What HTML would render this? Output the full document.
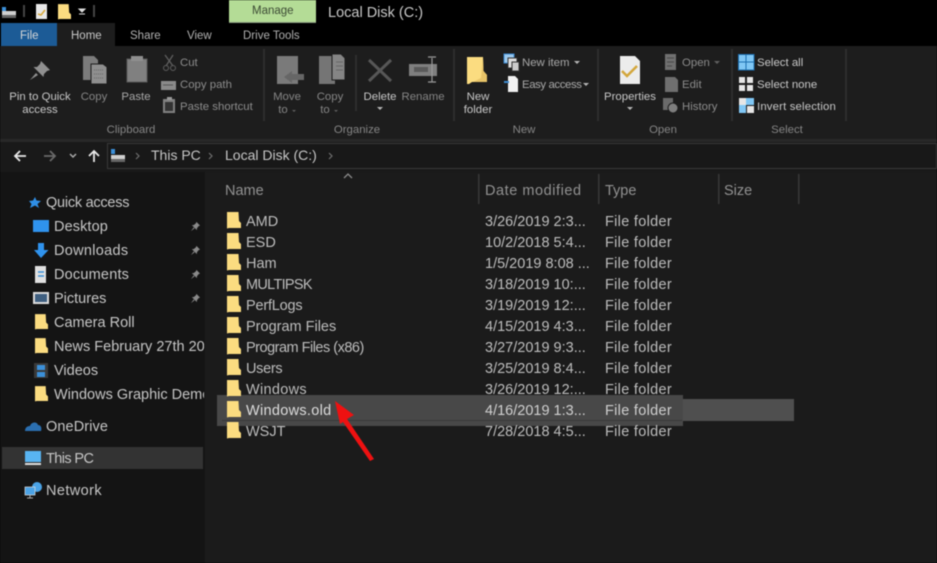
<!DOCTYPE html>
<html><head><meta charset="utf-8">
<style>
html,body{margin:0;padding:0;background:#000}
#r{position:relative;width:937px;height:563px;overflow:hidden;background:#1b1b1b;font-family:"Liberation Sans",sans-serif;filter:blur(.5px)}
.a{position:absolute}
.t{position:absolute;white-space:nowrap;line-height:14px;font-size:11.4px;color:#a8a8a8;margin-top:1px}
.c{transform:translateX(-50%)}
.w{color:#c8c8c8}
.d{color:#8c8c8c}
.g{color:#858585}
.s{font-size:14.5px;line-height:18px;color:#c6c6c6}
.h{font-size:14.5px;line-height:18px;color:#929292}
.f{font-size:14.5px;line-height:18px;color:#bdbdbd}
.y{letter-spacing:.3px}
svg{position:absolute;left:0;top:0}
</style></head><body><div id="r">
<div class="a" style="left:0;top:0;width:937px;height:46px;background:#000"></div>
<div class="a" style="left:0;top:46px;width:937px;height:93px;background:#1d1d1d"></div>
<div class="a" style="left:0;top:139px;width:937px;height:3px;background:#282828"></div>
<div class="a" style="left:0;top:142px;width:937px;height:30px;background:#191919"></div>
<div class="a" style="left:0;top:172px;width:205px;height:391px;background:#141414"></div>
<div class="a" style="left:205px;top:172px;width:732px;height:391px;background:#1b1b1b"></div>
<div class="a" style="left:107px;top:143px;width:830px;height:26px;border:1px solid #383838;box-sizing:border-box;background:#181818"></div>
<div class="a" style="left:1px;top:23px;width:56px;height:23px;background:#1c5b96"></div>
<div class="a" style="left:57px;top:23px;width:58px;height:23px;background:#1d1d1d"></div>
<div class="a" style="left:229px;top:0;width:87px;height:23px;background:#b4dc96"></div>
<div class="a" style="left:2px;top:447px;width:201px;height:22px;background:#333"></div>
<div class="a" style="left:683px;top:399px;width:111px;height:22px;background:#4f4f4f"></div>
<div class="a" style="left:217px;top:395px;width:466px;height:31px;background:#484848"></div>
<div class="a" style="left:222px;top:420px;width:460px;height:1px;background:#383838"></div>

<svg width="937" height="563" viewBox="0 0 937 563">
<defs>
<symbol id="fo" viewBox="0 0 14 17"><path d="M0 0H11.5L12 9L14 11V16H2L0 16.500Z" fill="#fbdc80"/></symbol>
<symbol id="fb" viewBox="0 0 20 27"><path d="M0 0H16L16.500 14L20 18V25H5L2 27H0Z" fill="#fbdc80"/><path d="M16 1L16.500 14L20 18V25H6L14 21Z" fill="#e8c468"/></symbol>
<symbol id="pn" viewBox="0 0 12 12"><path d="M7 1L11 5L9.500 5.500L7.500 8L7.500 10L2 4.500H4L6.500 2.500ZM4 7L1 11L5 8Z" fill="#8a8a8a"/></symbol>
</defs>
<!-- quick access -->
<rect x="2" y="11" width="14" height="7" fill="#cfcfcf"/><rect x="2" y="15" width="14" height="3" fill="#666"/><rect x="2" y="7" width="4" height="4" fill="#3b8fd8"/>
<rect x="23" y="5" width="2" height="12" fill="#444"/>
<rect x="36" y="4" width="11" height="15" fill="#e8e8e8"/><path d="M38 14L41 15L45 10" stroke="#d9a93a" stroke-width="1.500" fill="none"/>
<use href="#fo" x="58" y="4" width="13" height="16"/>
<path d="M79 9H85L82 12Z M79 14H85" stroke="#ddd" stroke-width="1" fill="#ddd"/>
<rect x="93" y="5" width="2" height="12" fill="#444"/>
<rect x="229" y="22" width="87" height="1" fill="#8a9a80"/>
<!-- pin -->
<path d="M41 61L50 70L47 71L44 74L43.500 77L33.500 67H37L40 64ZM36 73L30 80L38 75Z" fill="#909090"/>
<!-- copy -->
<path d="M83 56H94L98 60V80H83Z" fill="#7c7c7c"/><path d="M91 64H103L107 67V84H91Z" fill="#8f8f8f" stroke="#1d1d1d"/><path d="M94 70H104M94 74H104M94 78H104" stroke="#666" stroke-dasharray="1 1"/>
<!-- paste -->
<rect x="127" y="59" width="20" height="23" fill="#808080" stroke="#5a5a5a"/><rect x="131" y="56" width="12" height="5" fill="#8f8f8f"/>
<!-- cut -->
<path d="M165 55L173 66M173 55L166 66" stroke="#5e5e5e" stroke-width="1.300" fill="none"/><circle cx="166" cy="68" r="2.500" fill="none" stroke="#5e5e5e"/><circle cx="173" cy="68" r="2.500" fill="none" stroke="#5e5e5e"/>
<rect x="161" y="81" width="15" height="9" fill="#8a8a8a"/><path d="M163 85H173" stroke="#555"/>
<rect x="163" y="99" width="12" height="14" fill="#808080"/><rect x="165" y="102" width="8" height="9" fill="#333"/><rect x="167" y="97" width="5" height="3" fill="#999"/>
<!-- move to -->
<rect x="277" y="56" width="21" height="28" fill="#7a7a7a"/><path d="M284 77L292 71V74H304V80H292V83Z" fill="#666"/>
<!-- copy to -->
<path d="M319 56H335V84H319Z" fill="#757575"/><path d="M332 54H341L345 58V80H332Z" fill="#858585" stroke="#1d1d1d"/>
<path d="M336 62H343M336 66H343M336 70H343" stroke="#666"/>
<!-- delete -->
<path d="M369 60L391 81M391 60L369 81" stroke="#575757" stroke-width="3"/>
<!-- rename -->
<rect x="409" y="64" width="28" height="12" fill="#7f7f7f"/><rect x="414" y="67" width="14" height="5" fill="#5a5a5a"/><path d="M432 58V82M428 57H436M428 82H436" stroke="#9a9a9a" stroke-width="1.200"/>
<!-- new folder -->
<use href="#fb" x="467" y="57" width="20" height="27"/>
<!-- new item -->
<rect x="504" y="54" width="10" height="9" fill="#9cc8ec" stroke="#3d8ad0"/><rect x="508" y="58" width="9" height="10" fill="#ddd" stroke="#333"/><rect x="512" y="62" width="7" height="9" fill="#ccc" stroke="#333"/>
<!-- easy access -->
<path d="M508 76H515L518 79V92H508Z" fill="#f0f0f0"/><path d="M504 82H509" stroke="#3d8ad0" stroke-width="2"/>
<!-- properties -->
<path d="M620 56H635L640 61V84H620Z" fill="#ececec"/><path d="M622 71L627 76L637 66" stroke="#d3a63b" stroke-width="2.500" fill="none"/>
<!-- open/edit/history -->
<rect x="665" y="54" width="11" height="16" fill="#707070"/><path d="M667 58H674M667 62H674M667 66H672" stroke="#4a4a4a"/>
<path d="M665 77H675L678 80V92H665Z" fill="#6f6f6f"/>
<path d="M663 98H673V110H663Z" fill="#6a6a6a"/><circle cx="673" cy="108" r="5" fill="#7e7e7e" stroke="#1d1d1d"/>
<!-- select -->
<rect x="738.500" y="54.500" width="15.500" height="15.500" fill="#80c7f5" stroke="#1c6fb0"/><path d="M746 54V70M738 62H754" stroke="#1c6fb0"/>
<g fill="#e6e6e6"><rect x="739" y="77" width="6" height="6"/><rect x="747" y="77" width="6" height="6"/><rect x="739" y="85" width="6" height="6"/><rect x="747" y="85" width="6" height="6"/></g>
<rect x="739" y="98" width="7" height="7" fill="#e6e6e6"/><rect x="746" y="98" width="8" height="7" fill="#80c7f5"/><rect x="739" y="105" width="7" height="8" fill="#80c7f5"/><rect x="747" y="106" width="7" height="7" fill="#e6e6e6"/>
<!-- carets -->
<g fill="#b5b5b5"><path d="M574 61H580L577 64Z"/><path d="M583 83H589L586 86Z"/><path d="M377 107H383L380 110Z"/><path d="M627 107H633L630 110Z"/></g>
<path d="M714 61H720L717 64Z" fill="#5f5f5f"/><path d="M292 110H296L294 112Z" fill="#5f5f5f"/><path d="M334 110H338L336 112Z" fill="#5f5f5f"/>
<!-- ribbon seps -->
<g fill="#2e2e2e"><rect x="263" y="49" width="2" height="72"/><rect x="355" y="55" width="2" height="56"/><rect x="453" y="49" width="2" height="72"/><rect x="597" y="49" width="2" height="72"/><rect x="731" y="49" width="2" height="72"/><rect x="845" y="49" width="2" height="72"/></g>
<!-- nav -->
<path d="M26 156H15M20 151L15 156L20 161" stroke="#e8e8e8" stroke-width="1.800" fill="none"/>
<path d="M44 156H55M50 151L55 156L50 161" stroke="#6a6a6a" stroke-width="1.800" fill="none"/>
<path d="M70 154L73 157L76 154" stroke="#aaa" stroke-width="1.500" fill="none"/>
<path d="M94 162V151M89 156L94 151L99 156" stroke="#e8e8e8" stroke-width="1.800" fill="none"/>
<rect x="111" y="155" width="14" height="7" fill="#cfcfcf"/><rect x="111" y="159" width="14" height="3" fill="#666"/><rect x="111" y="149" width="4" height="5" fill="#3b8fd8"/>
<path d="M136 153L139 156L136 159M209 153L212 156L209 159M329 153L332 156L329 159" stroke="#6f6f6f" stroke-width="1.200" fill="none"/>
<!-- sidebar icons -->
<path d="M35 197L36.500 200.500L41 201L37.500 204L39 208L35 205.500L30 208L31.500 204L29 201L33 200.500Z" fill="#2f8fe6"/>
<rect x="33" y="220" width="16" height="12" fill="#2f93ee"/>
<path d="M38 243H44V250H48.500L41 258L34 250H38Z" fill="#2f93ee"/>
<rect x="35" y="266" width="11" height="17" fill="#e0e0e0"/><path d="M38 272H44M38 276H44" stroke="#3b8fd8" stroke-width="1.500"/>
<rect x="33" y="292" width="16" height="12" fill="#dcdcdc"/><rect x="35" y="294" width="12" height="8" fill="#3f5f80"/>
<use href="#fo" x="35" y="314" width="13" height="16"/>
<use href="#fo" x="35" y="338" width="13" height="16"/>
<rect x="34" y="363" width="14" height="15" fill="#3a3a3a"/><rect x="37" y="365" width="8" height="5" fill="#3b8fd8"/><rect x="37" y="372" width="8" height="5" fill="#3b8fd8"/>
<use href="#fo" x="35" y="386" width="13" height="16"/>
<path d="M25 431C25 427 28 426 30 426C31 422 37 421 38 425C41 425 42 428 41 431Z" fill="#2b6fb0"/>
<rect x="25" y="451" width="16" height="11" fill="#58b4f2"/><rect x="25" y="463" width="16" height="2" fill="#ddd"/>
<circle cx="37" cy="487" r="5" fill="#4ba3e6"/><rect x="25" y="487" width="10" height="8" fill="#4ba3e6" stroke="#ddd" stroke-width=".7"/><path d="M30 495V498M27 498H33" stroke="#aaa"/>
<use href="#pn" x="190" y="221" width="11" height="11"/><use href="#pn" x="190" y="245" width="11" height="11"/><use href="#pn" x="190" y="269" width="11" height="11"/><use href="#pn" x="190" y="293" width="11" height="11"/>
<!-- header -->
<path d="M344 178L348 174L352 178" stroke="#8a8a8a" stroke-width="1.300" fill="none"/>
<g fill="#383838"><rect x="478" y="174" width="1.500" height="30"/><rect x="598" y="174" width="1.500" height="30"/><rect x="718" y="174" width="1.500" height="30"/><rect x="798" y="174" width="1.500" height="30"/></g>
<!-- list folders -->
<use href="#fo" x="227" y="212" width="14" height="17"/><use href="#fo" x="227" y="233" width="14" height="17"/><use href="#fo" x="227" y="254" width="14" height="17"/><use href="#fo" x="227" y="275" width="14" height="17"/><use href="#fo" x="227" y="296" width="14" height="17"/><use href="#fo" x="227" y="317" width="14" height="17"/><use href="#fo" x="227" y="338" width="14" height="17"/><use href="#fo" x="227" y="359" width="14" height="17"/><use href="#fo" x="227" y="380" width="14" height="17"/><use href="#fo" x="227" y="401" width="14" height="17"/><use href="#fo" x="227" y="422" width="14" height="17"/>
</svg>

<div class="t" style="left:20px;top:28px;font-size:11.500px;color:#d8d8d8">File</div>
<div class="t" style="left:71px;top:28px;font-size:11.500px;color:#c8c8c8">Home</div>
<div class="t" style="left:130px;top:28px;font-size:11.500px;color:#b0b0b0">Share</div>
<div class="t" style="left:187px;top:28px;font-size:11.500px;color:#b0b0b0">View</div>
<div class="t" style="left:243px;top:28px;font-size:11.500px;color:#b0b0b0">Drive Tools</div>
<div class="t" style="left:252px;top:3px;font-size:11.500px;color:#3c4a34">Manage</div>
<div class="t" style="left:328px;top:3px;font-size:14.500px;line-height:18px;color:#c8c8c8">Local Disk (C:)</div>

<div class="t c w" style="left:40px;top:89px">Pin to Quick</div>
<div class="t c w" style="left:40px;top:102px">access</div>
<div class="t c g" style="left:94px;top:89px">Copy</div>
<div class="t c" style="left:136px;top:89px">Paste</div>
<div class="t d" style="left:180px;top:55px">Cut</div>
<div class="t d" style="left:180px;top:77px">Copy path</div>
<div class="t d" style="left:180px;top:99px">Paste shortcut</div>
<div class="t c g" style="left:131px;top:122px">Clipboard</div>
<div class="t c g" style="left:287px;top:89px">Move</div>
<div class="t c g" style="left:283px;top:102px">to</div>
<div class="t c g" style="left:330px;top:89px">Copy</div>
<div class="t c g" style="left:325px;top:102px">to</div>
<div class="t c w" style="left:380px;top:89px">Delete</div>
<div class="t c g" style="left:423px;top:89px">Rename</div>
<div class="t c g" style="left:357px;top:122px">Organize</div>
<div class="t c w" style="left:478px;top:89px">New</div>
<div class="t c w" style="left:478px;top:102px">folder</div>
<div class="t" style="left:522px;top:55px">New item</div>
<div class="t" style="left:522px;top:77px;letter-spacing:-.4px">Easy access</div>
<div class="t c g" style="left:524px;top:122px">New</div>
<div class="t c w" style="left:630px;top:89px">Properties</div>
<div class="t d" style="left:682px;top:55px">Open</div>
<div class="t d" style="left:682px;top:77px">Edit</div>
<div class="t d" style="left:682px;top:99px">History</div>
<div class="t c g" style="left:663px;top:122px">Open</div>
<div class="t w" style="left:757px;top:55px">Select all</div>
<div class="t w" style="left:757px;top:77px">Select none</div>
<div class="t w" style="left:757px;top:99px;letter-spacing:.15px">Invert selection</div>
<div class="t c g" style="left:787px;top:122px">Select</div>

<div class="t s" style="left:151px;top:145px;font-size:14px">This PC</div>
<div class="t s" style="left:225px;top:145px;font-size:14px">Local Disk (C:)</div>

<div class="t s" style="left:46px;top:193px;letter-spacing:-.25px">Quick access</div>
<div class="t s" style="left:54px;top:217px;letter-spacing:.1px">Desktop</div>
<div class="t s" style="left:54px;top:241px;letter-spacing:.3px">Downloads</div>
<div class="t s" style="left:54px;top:265px;letter-spacing:.2px">Documents</div>
<div class="t s" style="left:54px;top:289px">Pictures</div>
<div class="t s" style="left:54px;top:313px">Camera Roll</div>
<div class="t s" style="left:54px;top:337px;width:150px;overflow:hidden">News February 27th 2019</div>
<div class="t s" style="left:54px;top:361px">Videos</div>
<div class="t s" style="left:54px;top:385px;width:150px;overflow:hidden">Windows Graphic Demo</div>
<div class="t s" style="left:46px;top:417px;letter-spacing:.1px">OneDrive</div>
<div class="t s" style="left:46px;top:449px;letter-spacing:-.6px">This PC</div>
<div class="t s" style="left:46px;top:481px;letter-spacing:.4px">Network</div>

<div class="t h" style="left:225px;top:181px">Name</div>
<div class="t h" style="left:485px;top:181px;letter-spacing:.55px">Date modified</div>
<div class="t h" style="left:605px;top:181px">Type</div>
<div class="t h" style="left:724px;top:181px">Size</div>

<div class="t f" style="left:246px;top:212px">AMD</div><div class="t f" style="left:485px;top:212px">3/26/2019 2:3...</div><div class="t f y" style="left:605px;top:212px">File folder</div>
<div class="t f" style="left:246px;top:233px">ESD</div><div class="t f" style="left:485px;top:233px">10/2/2018 5:4...</div><div class="t f y" style="left:605px;top:233px">File folder</div>
<div class="t f" style="left:246px;top:254px">Ham</div><div class="t f" style="left:485px;top:254px">1/5/2019 8:08 ...</div><div class="t f y" style="left:605px;top:254px">File folder</div>
<div class="t f" style="left:246px;top:275px;letter-spacing:-.7px">MULTIPSK</div><div class="t f" style="left:485px;top:275px">3/18/2019 10:...</div><div class="t f y" style="left:605px;top:275px">File folder</div>
<div class="t f" style="left:246px;top:296px;letter-spacing:-.2px">PerfLogs</div><div class="t f" style="left:485px;top:296px">3/19/2019 12:...</div><div class="t f y" style="left:605px;top:296px">File folder</div>
<div class="t f" style="left:246px;top:317px">Program Files</div><div class="t f" style="left:485px;top:317px">4/15/2019 4:3...</div><div class="t f y" style="left:605px;top:317px">File folder</div>
<div class="t f" style="left:246px;top:338px;letter-spacing:-.5px">Program Files (x86)</div><div class="t f" style="left:485px;top:338px">3/27/2019 9:3...</div><div class="t f y" style="left:605px;top:338px">File folder</div>
<div class="t f" style="left:246px;top:359px;letter-spacing:-.3px">Users</div><div class="t f" style="left:485px;top:359px">3/25/2019 8:4...</div><div class="t f y" style="left:605px;top:359px">File folder</div>
<div class="t f y" style="left:246px;top:380px">Windows</div><div class="t f" style="left:485px;top:380px">3/26/2019 12:...</div><div class="t f y" style="left:605px;top:380px">File folder</div>
<div class="t f y" style="left:246px;top:401px;color:#ddd">Windows.old</div><div class="t f" style="left:485px;top:401px;color:#d0d0d0">4/16/2019 1:3...</div><div class="t f y" style="left:605px;top:401px;color:#d0d0d0">File folder</div>
<div class="t f" style="left:246px;top:422px">WSJT</div><div class="t f" style="left:485px;top:422px">7/28/2018 4:5...</div><div class="t f y" style="left:605px;top:422px">File folder</div>

<svg width="937" height="563" viewBox="0 0 937 563">
<path d="M335 401L354 415L347 419L374 459L370 461L343 422L340 424Z" fill="#ee1111"/>
</svg>
</div></body></html>
